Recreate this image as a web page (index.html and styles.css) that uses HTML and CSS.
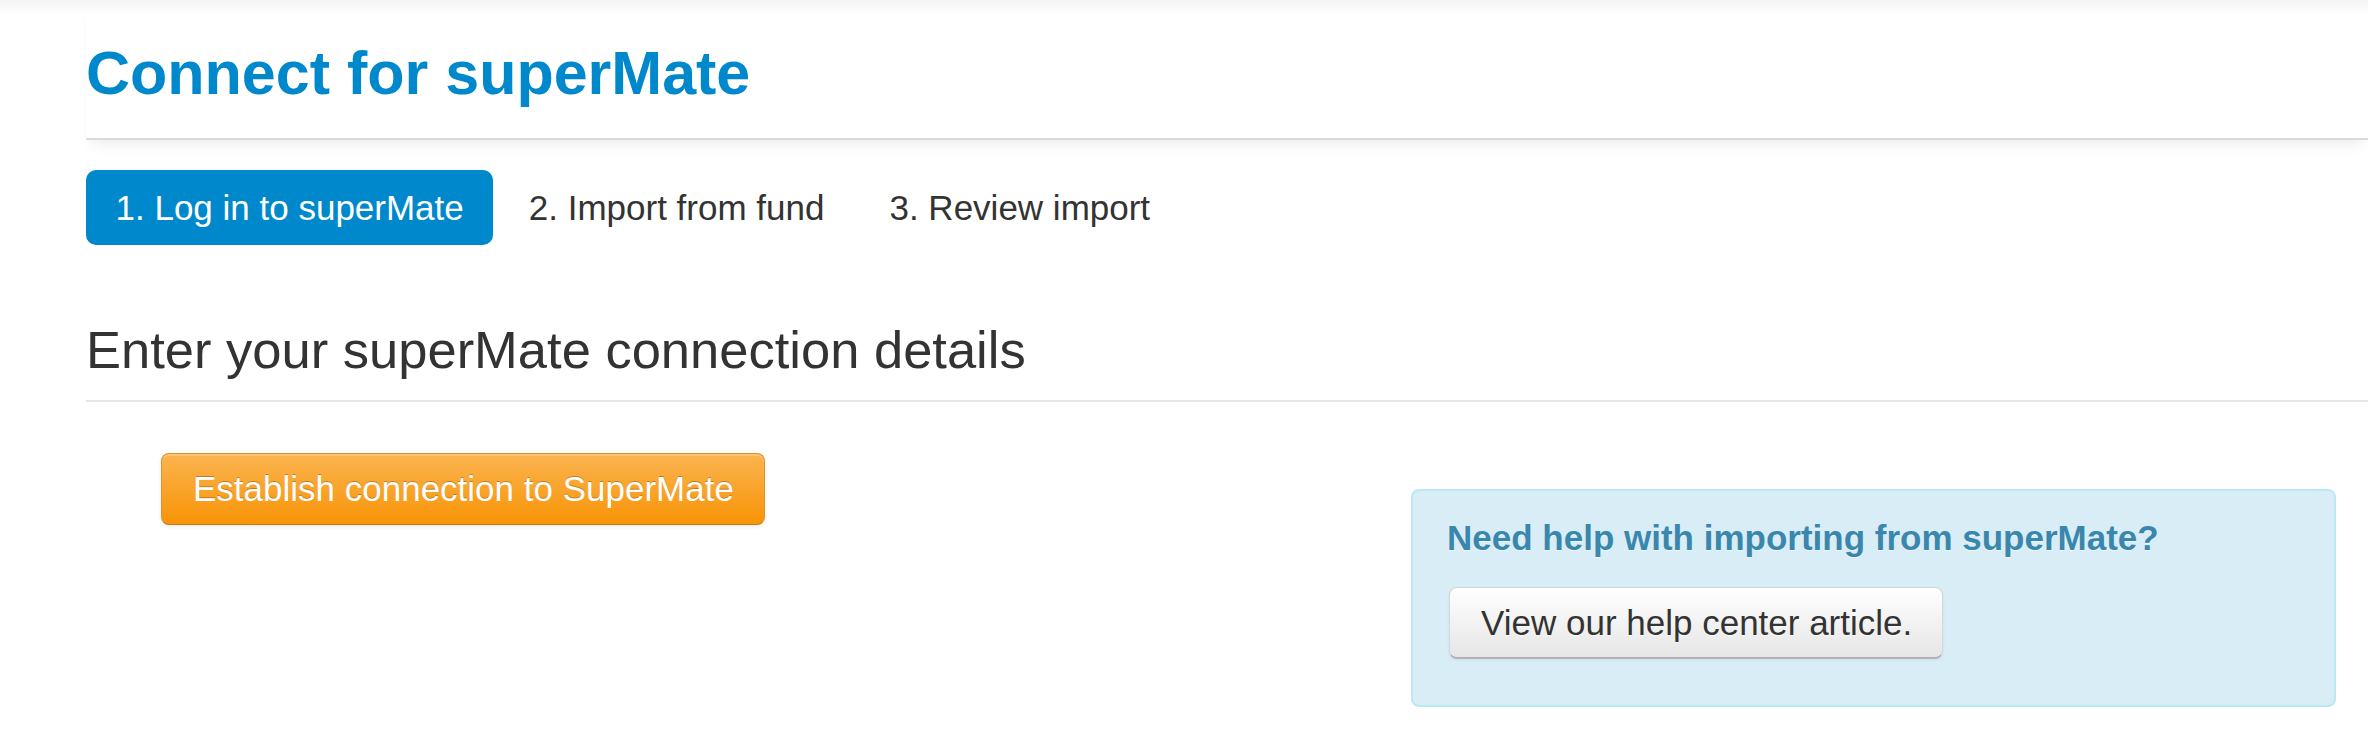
FILE: index.html
```html
<!DOCTYPE html>
<html lang="en">

<head>
    <meta charset="UTF-8">
    <meta name="viewport" content="width=device-width, initial-scale=1.0">
    <title>Connect for superMate</title>
    <link rel="stylesheet" href="styles.css">
</head>

<body>
    <div class="page">
        <header class="page-header">
            <h1>Connect for superMate</h1>
        </header>

        <ul class="steps">
            <li class="step active">1. Log in to superMate</li>
            <li class="step">2. Import from fund</li>
            <li class="step">3. Review import</li>
        </ul>

        <h3 class="section-title">Enter your superMate connection details</h3>

        <div class="row">
            <div class="connect-col">
                <button class="btn btn-warning" type="button">Establish connection to SuperMate</button>
            </div>
            <aside class="help-box">
                <h4>Need help with importing from superMate?</h4>
                <button class="btn btn-default" type="button">View our help center article.</button>
            </aside>
        </div>
    </div>
</body>

</html>
```

FILE: styles.css
```css
html {
    background-color: #ffffff;
}

body {
    margin: 0;
    padding: 0;
    font-family: "Liberation Sans", Arial, sans-serif;
    color: #333333;
    background-image: linear-gradient(to bottom, #f4f4f4, #ffffff 14px);
    background-repeat: no-repeat;
}

.page {
    padding-left: 86px;
}

.page-header {
    padding-top: 39px;
    padding-bottom: 31px;
    border-bottom: 2px solid #dadada;
    box-shadow: 0 10px 14px -6px rgba(0, 0, 0, 0.08);
}

.page-header h1 {
    margin: 0;
    font-size: 61px;
    line-height: 68px;
    font-weight: bold;
    color: #0088cc;
}

/* wizard steps */
.steps {
    list-style: none;
    margin: 30px 0 0;
    padding: 0;
    display: flex;
    gap: 6px;
}

.step {
    padding: 15px 29.5px;
    font-size: 35px;
    line-height: 45px;
    color: #333333;
    border-radius: 10px;
}

.step.active {
    background-color: #0088cc;
    color: #ffffff;
}

.section-title {
    margin: 76px 0 0;
    padding-bottom: 21px;
    font-size: 52.5px;
    line-height: 58px;
    font-weight: normal;
    color: #333333;
    border-bottom: 2px solid #e5e5e5;
}

.row {
    display: grid;
    grid-template-columns: 1fr 925px;
    padding-right: 32px;
    margin-top: 51px;
    align-items: start;
}

.connect-col {
    padding-left: 75px;
}

.btn {
    display: inline-block;
    margin: 0;
    padding: 14px 30px 14px 31px;
    font-family: inherit;
    font-size: 35px;
    line-height: 42px;
    border: 1px solid #cccccc;
    border-radius: 8px;
    cursor: pointer;
}

.btn-warning {
    color: #ffffff;
    background-image: linear-gradient(to bottom, #fbb450, #f89406);
    border-color: #dc9331 #dc9331 #c47a15;
    text-shadow: 0 -1px 0 rgba(0, 0, 0, 0.25);
    box-shadow: inset 0 2px 0 rgba(255, 255, 255, 0.2), 0 2px 4px rgba(0, 0, 0, 0.08);
}

.btn-default {
    color: #333333;
    background-image: linear-gradient(to bottom, #ffffff, #e6e6e6);
    border-color: #d6d6d6 #d6d6d6 #b3b3b3;
    border-bottom-width: 2px;
    padding-bottom: 13px;
    text-shadow: 0 1px 1px rgba(255, 255, 255, 0.75);
    box-shadow: inset 0 1px 0 rgba(255, 255, 255, 0.2), 0 1px 3px rgba(0, 0, 0, 0.06);
}

/* help panel */
.help-box {
    margin-top: 36px;
    padding: 24px 36px 46px 36px;
    background-color: #d9edf7;
    border: 2px solid #bce8f1;
    border-radius: 8px;
}

.help-box h4 {
    margin: 0 0 27px -2px;
    font-size: 35px;
    line-height: 45px;
    font-weight: bold;
    color: #3a87ad;
    text-shadow: 0 1px 0 rgba(255, 255, 255, 0.6);
}
```
